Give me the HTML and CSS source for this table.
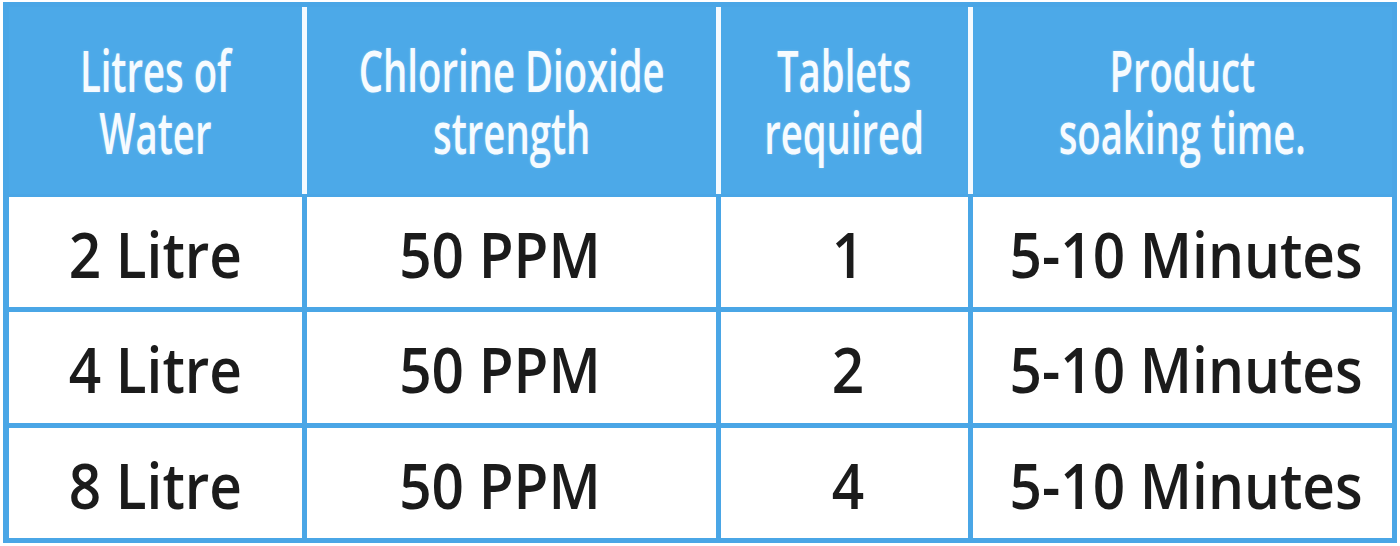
FILE: index.html
```html
<!DOCTYPE html>
<html lang="en">
<head>
<meta charset="utf-8">
<title>Chlorine Dioxide dosage table</title>
<link rel="stylesheet" href="styles.css">
</head>
<body>
<div class="chart">
  <div class="head">
    <div class="hcell"><span class="hlabel">Litres of<br>Water</span></div>
    <div class="hcell"><span class="hlabel">Chlorine Dioxide<br>strength</span></div>
    <div class="hcell"><span class="hlabel">Tablets<br>required</span></div>
    <div class="hcell"><span class="hlabel">Product<br>soaking time.</span></div>
  </div>
  <div class="rows">
    <div class="cell"><span class="val">2 Litre</span></div>
    <div class="cell strength"><span class="val">50 PPM</span></div>
    <div class="cell nudge"><span class="val">1</span></div>
    <div class="cell nudge"><span class="val">5-10 Minutes</span></div>
    <div class="cell"><span class="val">4 Litre</span></div>
    <div class="cell strength"><span class="val">50 PPM</span></div>
    <div class="cell nudge"><span class="val">2</span></div>
    <div class="cell nudge"><span class="val">5-10 Minutes</span></div>
    <div class="cell"><span class="val">8 Litre</span></div>
    <div class="cell strength"><span class="val">50 PPM</span></div>
    <div class="cell nudge"><span class="val">4</span></div>
    <div class="cell nudge"><span class="val">5-10 Minutes</span></div>
  </div>
</div>
</body>
</html>
```
FILE: styles.css
```css
html, body {
  background: #ffffff;
}
body {
  margin: 2px 3px;
}
.chart {
  box-sizing: border-box;
  width: 1394px;
  height: 541px;
  background: #4aa6e6;
  padding: 5px 5px 5px 6px;
  display: flex;
  flex-direction: column;
  gap: 3px;
}
.head {
  display: grid;
  grid-template-columns: 293px 409px 247px 419px;
  column-gap: 5px;
  height: 187px;
  background: #f4faff;
}
.hcell {
  background: #4ca9e8;
  display: flex;
  align-items: center;
  justify-content: center;
}
.hlabel {
  display: inline-block;
  font-family: "Open Sans", "Noto Sans", sans-serif;
  font-size: 58px;
  font-weight: 600;
  line-height: 62px;
  color: #f6fbff;
  text-align: center;
  white-space: nowrap;
  transform: scaleX(0.66);
  text-shadow: 0 0 3px rgba(255, 255, 255, 0.25);
}
.rows {
  flex: 1;
  display: grid;
  grid-template-columns: 293px 409px 247px 419px;
  grid-template-rows: repeat(3, 1fr);
  gap: 5px;
}
.cell {
  background: #ffffff;
  display: flex;
  align-items: center;
  justify-content: center;
  padding-top: 3px;
}
.val {
  display: inline-block;
  font-family: "Open Sans", "Noto Sans", sans-serif;
  font-size: 63px;
  font-weight: 600;
  color: #1b1b1b;
  white-space: nowrap;
  transform: scaleX(0.9);
}
.strength {
  padding-right: 24px;
}
.nudge {
  padding-left: 7px;
}
```
